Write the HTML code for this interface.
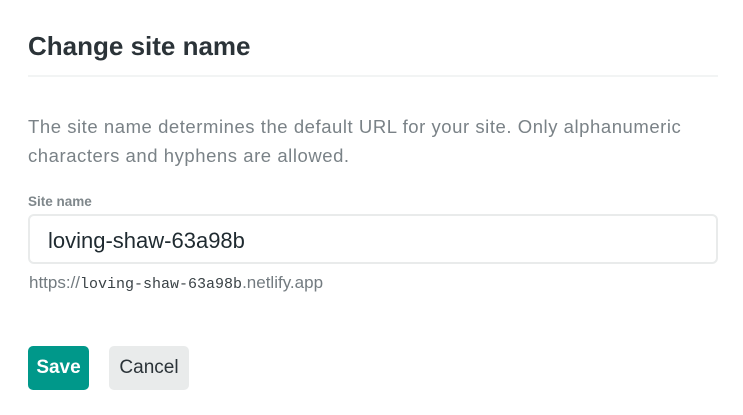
<!DOCTYPE html>
<html><head><style>
html,body{margin:0;padding:0;background:#fff;width:743px;height:415px;overflow:hidden;font-family:"Liberation Sans",sans-serif}
.t{position:absolute;left:28px;top:31px;font-size:26px;font-weight:bold;color:#2b3338;letter-spacing:0px}
.hr{position:absolute;left:28px;top:75px;width:690px;height:2px;background:#f2f4f4}
.p{position:absolute;left:28px;top:112px;font-size:18.5px;line-height:29px;color:#7a8287;white-space:nowrap;letter-spacing:0.55px}
.l{position:absolute;left:28px;top:194px;font-size:13.5px;font-weight:bold;color:#7f878b}
.in{position:absolute;left:28px;top:214px;width:686px;height:46px;border:2px solid #e9ebeb;border-radius:6px}
.in span{position:absolute;left:18px;top:12px;font-size:22px;color:#1f2a30}
.u{position:absolute;left:29px;top:273px;font-size:17px;color:#737b80}
.u code{font-family:"Liberation Mono",monospace;font-size:15px;color:#3a4246}
.b{position:absolute;top:346px;height:44px;border-radius:5px;font-size:19px;line-height:44px;text-align:center}
.s{left:28px;width:61px;background:#00988a;color:#fff;font-weight:bold}
.c{left:109px;width:80px;background:#e9ebeb;color:#2b3338}
</style></head><body>
<div class="t">Change site name</div>
<div class="hr"></div>
<div class="p">The site name determines the default URL for your site. Only alphanumeric<br>characters and hyphens are allowed.</div>
<div class="l">Site name</div>
<div class="in"><span>loving-shaw-63a98b</span></div>
<div class="u">https://<code>loving-shaw-63a98b</code>.netlify.app</div>
<div class="b s">Save</div>
<div class="b c">Cancel</div>
</body></html>
